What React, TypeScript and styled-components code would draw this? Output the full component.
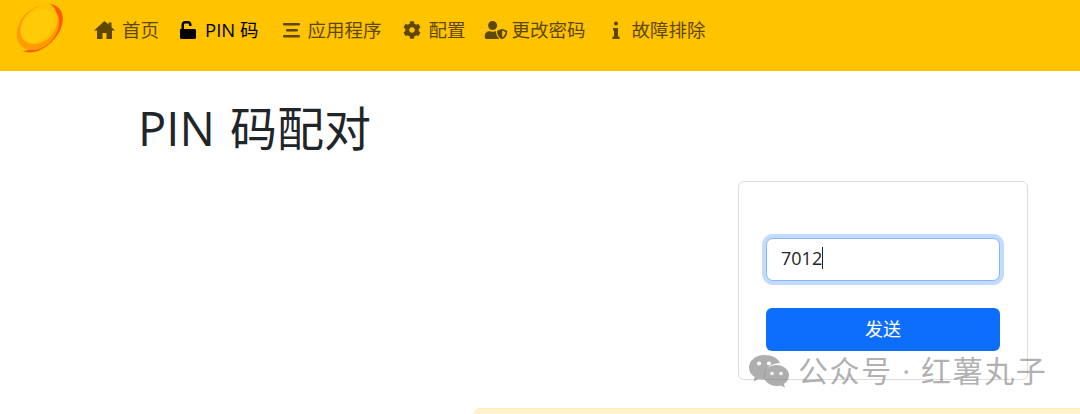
import React from "react";
import styled, { createGlobalStyle } from "styled-components";
import { FaCog, FaUserShield } from "react-icons/fa";

const Global = createGlobalStyle`
  html, body { margin: 0; padding: 0; background: #fff; height: 414px; overflow: hidden; }
  body { font-family: "Open Sans", "Noto Sans CJK SC", sans-serif; color: #212529; }
`;

const Page = styled.div`
  position: relative;
  width: 1080px;
  height: 414px;
  overflow: hidden;
`;

const Navbar = styled.nav`
  height: 71px;
  background: #ffc300;
  display: flex;
  align-items: center;
  padding-left: 14px;
`;

const LogoBox = styled.div`
  width: 51px;
  height: 52px;
  margin-top: -13px;
  margin-right: 29px;
  flex: none;
`;

const NavList = styled.div`
  display: flex;
  align-items: center;
  margin-top: -12px;
`;

const NavItem = styled.a<{ $active?: boolean; $gap: number; $ml: number; $iconW: number }>`
  display: flex;
  align-items: center;
  margin-left: ${(p) => p.$ml}px;
  gap: ${(p) => p.$gap}px;
  font-size: 18.5px;
  line-height: 24px;
  white-space: nowrap;
  color: ${(p) => (p.$active ? "#000" : "#5e4700")};
  svg {
    width: ${(p) => p.$iconW}px;
    height: 18px;
    flex: none;
  }
`;

const Main = styled.main`
  display: flex;
  flex-direction: column;
`;

const Title = styled.h1`
  margin: 24px 0 0 138px;
  font-size: 47px;
  word-spacing: 3px;
  line-height: 66px;
  font-weight: 400;
  color: #212529;
`;

const Card = styled.section`
  box-sizing: border-box;
  align-self: flex-end;
  margin: 20px 52px 0 0;
  width: 290px;
  height: 199px;
  border: 1px solid #dcdcdc;
  border-radius: 6px;
  padding: 56px 27px 0;
  display: flex;
  flex-direction: column;
`;

const PinInput = styled.div`
  box-sizing: border-box;
  height: 43px;
  border: 1px solid #86b7fe;
  border-radius: 7px;
  box-shadow: 0 0 0 4px #c2dbfe;
  background: #fff;
  display: flex;
  align-items: center;
  padding: 0 0 3px 14px;
  font-size: 18px;
  color: #212529;
`;

const Caret = styled.span`
  display: inline-block;
  width: 1px;
  height: 22px;
  background: #212529;
`;

const SendButton = styled.button`
  height: 43px;
  margin-top: 27px;
  border: 0;
  border-radius: 6px;
  padding: 0 0 4px;
  background: #0d6efd;
  color: #fff;
  font: inherit;
  font-size: 18px;
`;

const Alert = styled.div`
  position: absolute;
  left: 474px;
  top: 408px;
  width: 640px;
  height: 40px;
  background: #fff3cd;
  border: 1px solid #ffecb5;
  border-radius: 6px;
`;

const Watermark = styled.div`
  position: absolute;
  left: 749px;
  top: 352px;
  display: flex;
  align-items: center;
  gap: 9px;
  color: rgba(110, 110, 110, 0.55);
  font-size: 30px;
  line-height: 38px;
  letter-spacing: 1.6px;
  white-space: nowrap;
`;

const Logo = () => (
  <svg width="51" height="52" viewBox="0 0 51 52">
    <path d="M9 48C22 54 43 40 48 22 51 11 46 2 36 1c8 5 8 14 4 24C35 36 22 47 9 48z" fill="#ff5a00" />
    <ellipse cx="24" cy="25" rx="18.500" ry="24.500" transform="rotate(40 24 25)" fill="#ff9a00" />
    <ellipse cx="25" cy="22" rx="16" ry="21.500" transform="rotate(42 25 22)" fill="#ffc400" />
    <ellipse cx="24" cy="23" rx="13.500" ry="19" transform="rotate(42 24 23)" fill="#ffcb08" />
  </svg>
);

const HomeIcon = () => (
  <svg viewBox="0 0 21 18" fill="currentColor">
    <path d="M10.500 0 0 9.500h3V18h5.500v-6h4v6H18V9.500h3l-3.500-3.200V1.500h-3v2z" />
  </svg>
);

const UnlockIcon = () => (
  <svg viewBox="0 0 17 18" fill="currentColor">
    <path d="M5 0C3 0 1.500 1.600 1.500 3.600V8H0v8.500C0 17.300.7 18 1.500 18h13c.8 0 1.500-.7 1.500-1.500V9.300C16 8.600 15.400 8 14.500 8H4V3.600C4 2.900 4.400 2.400 5.500 2.400h2c1 0 1.500.6 1.500 1.300V5h2.500V3.600C11.500 1.600 10 0 8 0z" />
  </svg>
);

const MenuIcon = () => (
  <svg viewBox="0 0 18 18" fill="currentColor">
    <rect x="0" y="2" width="17" height="2.500" rx="1" />
    <rect x="3" y="8" width="12" height="2.500" rx="1" />
    <rect x="0" y="14" width="17" height="2.500" rx="1" />
  </svg>
);

const InfoIcon = () => (
  <svg viewBox="0 0 8 18" fill="currentColor">
    <circle cx="4" cy="2.500" r="2" />
    <path d="M1 7h5v8.500h1.500V18H.5v-2.500H2V9.500H1z" />
  </svg>
);

const WeChat = () => (
  <svg width="40" height="34" viewBox="0 0 40 34" fill="rgba(120,120,120,0.6)">
    <path d="M15 1C7 1 0 6.500 0 13.500c0 4 2.300 7.300 5.800 9.500L4.500 27.500l5.200-2.800c1.700.5 3.300.8 5 .8.500 0 1 0 1.500-.1-.4-1.200-.6-2.400-.6-3.700 0-7 6.500-12.500 14.400-12.500h1.100C29.600 4.500 22.900 1 15 1z" />
    <ellipse cx="10" cy="9.500" rx="2.100" ry="2.100" fill="#fff" />
    <ellipse cx="20" cy="9.500" rx="2.100" ry="2.100" fill="#fff" />
    <path d="M40 21.500C40 15.600 34.200 11 27.500 11S15 15.600 15 21.500 20.800 32 27.500 32c1.500 0 2.900-.2 4.200-.6l4.300 2.300-1.100-3.800C38 27.900 40 24.900 40 21.500z" />
    <circle cx="23" cy="19.500" r="1.800" fill="#fff" />
    <circle cx="32" cy="19.500" r="1.800" fill="#fff" />
  </svg>
);

export default function App() {
  return (
    <Page>
      <Global />
      <Navbar>
        <LogoBox><Logo /></LogoBox>
        <NavList>
          <NavItem $ml={0} $gap={7} $iconW={21}><HomeIcon />首页</NavItem>
          <NavItem $ml={21} $gap={8} $iconW={17} $active><UnlockIcon />PIN 码</NavItem>
          <NavItem $ml={24} $gap={7} $iconW={18}><MenuIcon />应用程序</NavItem>
          <NavItem $ml={21} $gap={8} $iconW={18}><FaCog />配置</NavItem>
          <NavItem $ml={18} $gap={4} $iconW={24}><FaUserShield />更改密码</NavItem>
          <NavItem $ml={26} $gap={12} $iconW={8}><InfoIcon />故障排除</NavItem>
        </NavList>
      </Navbar>
      <Main>
        <Title>PIN 码配对</Title>
        <Card>
          <PinInput>7012<Caret /></PinInput>
          <SendButton>发送</SendButton>
        </Card>
      </Main>
      <Alert />
      <Watermark><WeChat />公众号 · 红薯丸子</Watermark>
    </Page>
  );
}
